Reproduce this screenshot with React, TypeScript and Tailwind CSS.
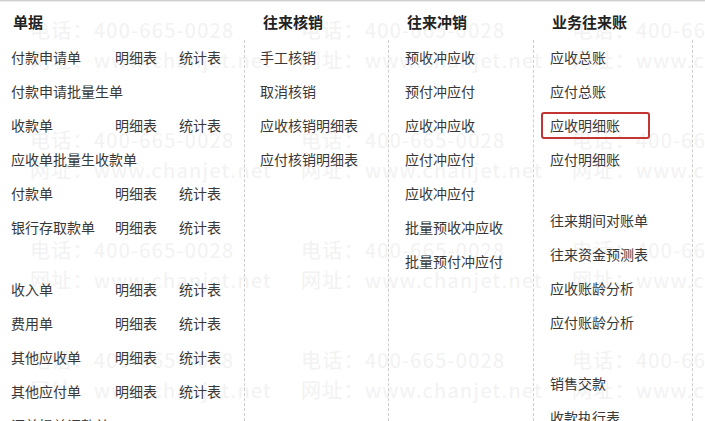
import React from 'react'

type Row = { name: string; detail?: boolean; spacer?: boolean; boxed?: boolean }

const docRows: Row[] = [
  { name: '付款申请单', detail: true },
  { name: '付款申请批量生单' },
  { name: '收款单', detail: true },
  { name: '应收单批量生收款单' },
  { name: '付款单', detail: true },
  { name: '银行存取款单', detail: true },
  { name: '', spacer: true },
  { name: '收入单', detail: true },
  { name: '费用单', detail: true },
  { name: '其他应收单', detail: true },
  { name: '其他应付单', detail: true },
  { name: '汇兑损益调整单' },
]

const verifyRows: Row[] = [
  { name: '手工核销' },
  { name: '取消核销' },
  { name: '应收核销明细表' },
  { name: '应付核销明细表' },
]

const offsetRows: Row[] = [
  { name: '预收冲应收' },
  { name: '预付冲应付' },
  { name: '应收冲应收' },
  { name: '应付冲应付' },
  { name: '应收冲应付' },
  { name: '批量预收冲应收' },
  { name: '批量预付冲应付' },
]

const ledgerRows: Row[] = [
  { name: '应收总账' },
  { name: '应付总账' },
  { name: '应收明细账', boxed: true },
  { name: '应付明细账' },
  { name: '', spacer: true },
  { name: '往来期间对账单' },
  { name: '往来资金预测表' },
  { name: '应收账龄分析' },
  { name: '应付账龄分析' },
  { name: '', spacer: true },
  { name: '销售交款' },
  { name: '收款执行表' },
]

function Watermark() {
  const cells = Array.from({ length: 12 })
  return (
    <div className="pointer-events-none absolute inset-0 overflow-hidden">
      <div className="grid grid-cols-[repeat(3,271px)] auto-rows-[110px] pl-[30px] pt-[15px]">
        {cells.map((_, i) => (
          <div key={i} className="text-[20px] leading-[30px] tracking-[1.3px] text-[#f2f2f2] whitespace-nowrap">
            <div>电话：400-665-0028</div>
            <div>网址：www.chanjet.net</div>
          </div>
        ))}
      </div>
    </div>
  )
}

function Heading({ children, pad }: { children: React.ReactNode; pad: string }) {
  return <div className={`h-10 pt-[4px] leading-[36px] text-[15px] font-bold text-[#222] ${pad}`}>{children}</div>
}

function Item({ row }: { row: Row }) {
  if (row.spacer) return <div className="h-[27px]" />
  return (
    <div className="relative h-[34px] leading-[34px] whitespace-nowrap">
      {row.boxed ? (
        <div className="absolute left-[-9px] top-[4px] h-[27px] w-[109px] rounded-[3px] border-2 border-[#c23531]" />
      ) : null}
      {row.name}
    </div>
  )
}

export default function App() {
  return (
    <div
      className="relative h-[421px] w-[705px] overflow-hidden bg-white text-[14px] text-[#383838]"
      style={{ fontFamily: '"Noto Sans CJK SC", "Noto Sans", sans-serif' }}
    >
      <div className="h-px bg-[#cfcfcf]" />
      <div className="h-px bg-[#ebebeb]" />
      <Watermark />
      <div className="relative -mt-[2px] flex">
        {/* 单据 */}
        <div className="w-[244px] shrink-0">
          <Heading pad="pl-[13px]">单据</Heading>
          <div className="pl-[11px]">
            {docRows.map((r, i) =>
              r.spacer ? (
                <div key={i} className="h-[28px]" />
              ) : (
                <div key={i} className="flex h-[34px] leading-[34px] whitespace-nowrap">
                  <span className="w-[104px]">{r.name}</span>
                  {r.detail ? (
                    <>
                      <span className="w-[64px]">明细表</span>
                      <span>统计表</span>
                    </>
                  ) : null}
                </div>
              )
            )}
          </div>
        </div>

        {/* 往来核销 */}
        <div className="w-[144px] shrink-0">
          <Heading pad="pl-[19px]">往来核销</Heading>
          <div className="h-[381px] border-l border-dashed border-[#cdcdcd] pl-[15px]">
            {verifyRows.map((r, i) => (
              <Item key={i} row={r} />
            ))}
          </div>
        </div>

        {/* 往来冲销 */}
        <div className="w-[145px] shrink-0">
          <Heading pad="pl-[19px]">往来冲销</Heading>
          <div className="h-[381px] border-l border-dashed border-[#cdcdcd] pl-[16px]">
            {offsetRows.map((r, i) => (
              <Item key={i} row={r} />
            ))}
          </div>
        </div>

        {/* 业务往来账 */}
        <div className="w-[160px] shrink-0">
          <Heading pad="pl-[19px]">业务往来账</Heading>
          <div className="h-[381px] border-x border-dashed border-[#cdcdcd] pl-[16px]">
            {ledgerRows.map((r, i) => (
              <Item key={i} row={r} />
            ))}
          </div>
        </div>
      </div>
    </div>
  )
}
